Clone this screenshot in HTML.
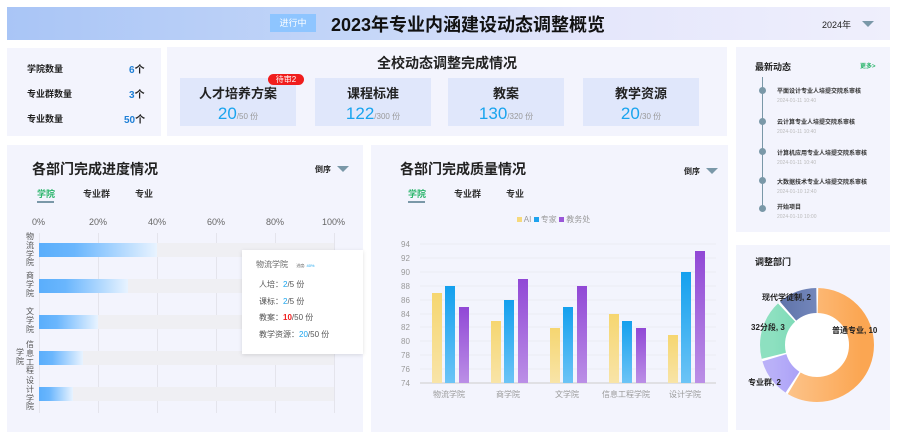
<!DOCTYPE html>
<html><head><meta charset="utf-8"><style>
*{margin:0;padding:0;box-sizing:border-box}
body{width:900px;height:440px;background:#fff;font-family:"Liberation Sans","Noto Sans CJK SC",sans-serif;position:relative;overflow:hidden;color:#222}
.a{position:absolute}
.card{position:absolute;background:#f3f4fd}
.b{font-weight:bold}
.sub{position:absolute;background:#e0e7fb;text-align:center;width:116px;height:48px;top:78px}
.sub .t{font-size:13px;font-weight:bold;margin-top:5px;color:#222}
.sub .v{font-size:17px;color:#19a4ee;margin-top:2px}
.sub .v small{font-size:8px;color:#999}
.caret{position:absolute;width:0;height:0;border-left:6px solid transparent;border-right:6px solid transparent;border-top:6px solid #7a98a8}
.tab{position:absolute;font-size:9px;font-weight:bold;color:#333}
.gl{position:absolute;width:1px;background:#e4e4ec;top:233px;height:180px}
.bg{position:absolute;left:39px;width:295px;height:14px;background:#efeff3}
.bar{position:absolute;left:39px;height:14px;background:linear-gradient(90deg,#5aaefc,#6ab6fd 30%,#e8f3ff)}
.yl{position:absolute;font-size:8px;color:#555;width:10px;line-height:8.8px;left:25px;text-align:center}
.tl{position:absolute;left:777px;font-size:6px;font-weight:bold;color:#333}
.td{position:absolute;left:777px;font-size:5px;color:#bbb}
.dot{position:absolute;left:759px;width:7px;height:7px;border-radius:50%;background:#7a98a8}
</style></head><body>
<div class="a" style="left:7px;top:7px;width:883px;height:33px;background:linear-gradient(90deg,#a9c5f6,#c4d6f8 40%,#e4e6fb 65%,#efeffc)"></div>
<div class="a" style="left:270px;top:14px;width:46px;height:18px;background:#8ec5ff;color:#fff;font-size:9px;text-align:center;line-height:18px">进行中</div>
<div class="a b" style="left:331px;top:11px;font-size:18px;color:#111">2023年专业内涵建设动态调整概览</div>
<div class="a" style="left:822px;top:18px;font-size:9px;color:#222">2024年</div>
<div class="caret" style="left:862px;top:21px"></div>

<div class="card" style="left:7px;top:48px;width:154px;height:88px"></div>
<div class="a b" style="left:27px;top:62px;font-size:9px">学院数量</div>
<div class="a b" style="left:27px;top:87px;font-size:9px">专业群数量</div>
<div class="a b" style="left:27px;top:112px;font-size:9px">专业数量</div>
<div class="a b" style="left:129px;top:61px;font-size:10px"><span style="color:#1e7fd6">6</span>个</div>
<div class="a b" style="left:129px;top:86px;font-size:10px"><span style="color:#1e7fd6">3</span>个</div>
<div class="a b" style="left:124px;top:111px;font-size:10px"><span style="color:#1e7fd6">50</span>个</div>

<div class="card" style="left:167px;top:47px;width:560px;height:89px"></div>
<div class="a b" style="left:167px;width:560px;text-align:center;top:53px;font-size:14px">全校动态调整完成情况</div>
<div class="sub" style="left:180px"><div class="t">人才培养方案</div><div class="v">20<small>/50 份</small></div></div>
<div class="a" style="left:268px;top:74px;width:36px;height:11px;background:#f01d1d;border-radius:6px;color:#fff;font-size:8px;text-align:center;line-height:11px">待审2</div>
<div class="sub" style="left:315px"><div class="t">课程标准</div><div class="v">122<small>/300 份</small></div></div>
<div class="sub" style="left:448px"><div class="t">教案</div><div class="v">130<small>/320 份</small></div></div>
<div class="sub" style="left:583px"><div class="t">教学资源</div><div class="v">20<small>/30 份</small></div></div>

<div class="card" style="left:736px;top:47px;width:154px;height:185px"></div>
<div class="a b" style="left:755px;top:60px;font-size:9px">最新动态</div>
<div class="a b" style="left:860px;top:61px;font-size:6px;color:#2ab56b">更多&gt;</div>
<div class="a" style="left:762px;top:77px;width:1px;height:133px;background:#7a98a8"></div>
<div class="dot" style="top:87px"></div><div class="tl" style="top:86px">平面设计专业人培提交院系审核</div><div class="td" style="top:98px">2024-01-11 10:40</div>
<div class="dot" style="top:118px"></div><div class="tl" style="top:117px">云计算专业人培提交院系审核</div><div class="td" style="top:129px">2024-01-11 10:40</div>
<div class="dot" style="top:148px"></div><div class="tl" style="top:148px">计算机应用专业人培提交院系审核</div><div class="td" style="top:160px">2024-01-11 10:40</div>
<div class="dot" style="top:177px"></div><div class="tl" style="top:177px">大数据技术专业人培提交院系审核</div><div class="td" style="top:189px">2024-01-10 12:40</div>
<div class="dot" style="top:205px"></div><div class="tl" style="top:202px">开始项目</div><div class="td" style="top:214px">2024-01-10 10:00</div>

<!-- left chart -->
<div class="card" style="left:7px;top:145px;width:356px;height:287px"></div>
<div class="a b" style="left:32px;top:159px;font-size:14px">各部门完成进度情况</div>
<div class="a b" style="left:315px;top:164px;font-size:8px">倒序</div>
<div class="caret" style="left:337px;top:166px"></div>
<div class="tab" style="left:37px;top:187px;color:#2ab56b">学院</div>
<div class="a" style="left:37px;top:201px;width:17px;height:2px;background:#7a98a8"></div>
<div class="tab" style="left:83px;top:187px">专业群</div>
<div class="tab" style="left:135px;top:187px">专业</div>
<div class="a" style="left:32px;top:217px;font-size:9px;color:#666">0%</div>
<div class="a" style="left:89px;top:217px;font-size:9px;color:#666">20%</div>
<div class="a" style="left:148px;top:217px;font-size:9px;color:#666">40%</div>
<div class="a" style="left:207px;top:217px;font-size:9px;color:#666">60%</div>
<div class="a" style="left:266px;top:217px;font-size:9px;color:#666">80%</div>
<div class="a" style="left:322px;top:217px;font-size:9px;color:#666">100%</div>
<div class="gl" style="left:39px"></div><div class="gl" style="left:98px"></div><div class="gl" style="left:157px"></div><div class="gl" style="left:216px"></div><div class="gl" style="left:275px"></div><div class="gl" style="left:334px"></div>
<div class="bg" style="top:243px"></div><div class="bar" style="top:243px;width:118px"></div>
<div class="bg" style="top:279px"></div><div class="bar" style="top:279px;width:89px"></div>
<div class="bg" style="top:315px"></div><div class="bar" style="top:315px;width:59px"></div>
<div class="bg" style="top:351px"></div><div class="bar" style="top:351px;width:44px"></div>
<div class="bg" style="top:387px"></div><div class="bar" style="top:387px;width:34px"></div>
<div class="yl" style="top:233px">物流学院</div>
<div class="yl" style="top:272px">商学院</div>
<div class="yl" style="top:308px">文学院</div>
<div class="yl" style="top:341px">信息工程</div>
<div class="yl" style="top:377px">设计学院</div>
<div class="yl" style="left:15px;top:349px">学院</div>
<div class="a" style="left:242px;top:250px;width:121px;height:104px;background:#fff;box-shadow:0 1px 4px rgba(0,0,0,.12)"></div>
<div class="a" style="left:256px;top:259px;font-size:8px;color:#666">物流学院 <span style="font-size:4px;margin-left:6px">进度: <span style="color:#19a4ee">40%</span></span></div>
<div class="a" style="left:259px;top:279px;font-size:8px;color:#555">人培：<span style="color:#19a4ee">2</span>/5 份</div>
<div class="a" style="left:259px;top:296px;font-size:8px;color:#555">课标：<span style="color:#19a4ee">2</span>/5 份</div>
<div class="a" style="left:259px;top:312px;font-size:8px;color:#555">教案：<span style="color:#f01d1d;font-weight:bold">10</span>/50 份</div>
<div class="a" style="left:259px;top:329px;font-size:8px;color:#555">教学资源：<span style="color:#19a4ee">20</span>/50 份</div>

<!-- middle chart -->
<div class="card" style="left:371px;top:145px;width:357px;height:287px"></div>
<div class="a b" style="left:400px;top:159px;font-size:14px">各部门完成质量情况</div>
<div class="a b" style="left:684px;top:166px;font-size:8px">倒序</div>
<div class="caret" style="left:706px;top:168px"></div>
<div class="tab" style="left:408px;top:187px;color:#2ab56b">学院</div>
<div class="a" style="left:408px;top:201px;width:17px;height:2px;background:#7a98a8"></div>
<div class="tab" style="left:454px;top:187px">专业群</div>
<div class="tab" style="left:506px;top:187px">专业</div>
<div class="a" style="left:517px;top:214px;font-size:8px;color:#999"><span style="display:inline-block;width:5px;height:5px;background:#f6d97c"></span> AI <span style="display:inline-block;width:5px;height:5px;background:#1ea3ee"></span> 专家 <span style="display:inline-block;width:5px;height:5px;background:#9a56d8"></span> 教务处</div>
<svg class="a" style="left:371px;top:140px" width="357" height="300">
<defs>
<linearGradient id="gy" x1="0" y1="0" x2="0" y2="1"><stop offset="0" stop-color="#f6d670"/><stop offset="1" stop-color="#f8e4a8"/></linearGradient>
<linearGradient id="gb" x1="0" y1="0" x2="0" y2="1"><stop offset="0" stop-color="#14a0ee"/><stop offset="1" stop-color="#6cc4f6"/></linearGradient>
<linearGradient id="gp" x1="0" y1="0" x2="0" y2="1"><stop offset="0" stop-color="#9148d6"/><stop offset="1" stop-color="#bb8fe6"/></linearGradient>
</defs>
<g stroke="#ebebf3" stroke-width="1">
<line x1="49" x2="345" y1="104" y2="104"/><line x1="49" x2="345" y1="118" y2="118"/><line x1="49" x2="345" y1="132" y2="132"/><line x1="49" x2="345" y1="146" y2="146"/><line x1="49" x2="345" y1="160" y2="160"/><line x1="49" x2="345" y1="174" y2="174"/><line x1="49" x2="345" y1="187" y2="187"/><line x1="49" x2="345" y1="201" y2="201"/><line x1="49" x2="345" y1="215" y2="215"/><line x1="49" x2="345" y1="229" y2="229"/>
</g>
<line x1="49" x2="345" y1="243" y2="243" stroke="#ccc"/>
<g font-size="8" fill="#999" font-family="Liberation Sans">
<text x="30" y="107">94</text><text x="30" y="121">92</text><text x="30" y="135">90</text><text x="30" y="149">88</text><text x="30" y="163">86</text><text x="30" y="177">84</text><text x="30" y="190">82</text><text x="30" y="204">80</text><text x="30" y="218">78</text><text x="30" y="232">76</text><text x="30" y="246">74</text>
</g>
<g font-size="8" fill="#999" font-family="Liberation Sans,Noto Sans CJK SC" text-anchor="middle">
<text x="78" y="257">物流学院</text><text x="137" y="257">商学院</text><text x="196" y="257">文学院</text><text x="255" y="257">信息工程学院</text><text x="314" y="257">设计学院</text>
</g>
<g>
<rect x="61" y="153" width="10" height="90" fill="url(#gy)"/><rect x="74" y="146" width="10" height="97" fill="url(#gb)"/><rect x="88" y="167" width="10" height="76" fill="url(#gp)"/>
<rect x="120" y="181" width="10" height="62" fill="url(#gy)"/><rect x="133" y="160" width="10" height="83" fill="url(#gb)"/><rect x="147" y="139" width="10" height="104" fill="url(#gp)"/>
<rect x="179" y="188" width="10" height="55" fill="url(#gy)"/><rect x="192" y="167" width="10" height="76" fill="url(#gb)"/><rect x="206" y="146" width="10" height="97" fill="url(#gp)"/>
<rect x="238" y="174" width="10" height="69" fill="url(#gy)"/><rect x="251" y="181" width="10" height="62" fill="url(#gb)"/><rect x="265" y="188" width="10" height="55" fill="url(#gp)"/>
<rect x="297" y="195" width="10" height="48" fill="url(#gy)"/><rect x="310" y="132" width="10" height="111" fill="url(#gb)"/><rect x="324" y="111" width="10" height="132" fill="url(#gp)"/>
</g>
</svg>

<!-- donut -->
<div class="card" style="left:736px;top:245px;width:154px;height:185px"></div>
<div class="a b" style="left:755px;top:255px;font-size:9px">调整部门</div>
<svg class="a" style="left:736px;top:245px" width="154" height="185">
<defs>
<linearGradient id="d1" x1="0" y1="0" x2="0" y2="1"><stop offset="0" stop-color="#fdc995"/><stop offset="1" stop-color="#fba652"/></linearGradient>
<linearGradient id="d2" x1="0" y1="0" x2="0" y2="1"><stop offset="0" stop-color="#b9b0f8"/><stop offset="1" stop-color="#8d7ff4"/></linearGradient>
<linearGradient id="d3" x1="0" y1="0" x2="0" y2="1"><stop offset="0" stop-color="#8de0c0"/><stop offset="1" stop-color="#55cc9e"/></linearGradient>
<linearGradient id="d4" x1="0" y1="0" x2="0" y2="1"><stop offset="0" stop-color="#5b6fa6"/><stop offset="1" stop-color="#8c9fd0"/></linearGradient>
</defs>
<circle cx="81" cy="100" r="57" fill="#fff"/>
<g transform="rotate(-90 81 100)" fill="none" stroke-width="25">
<circle cx="81" cy="100" r="44.5" stroke="url(#d1)" stroke-dasharray="162.5 400" stroke-dashoffset="-1"/>
<circle cx="81" cy="100" r="44.5" stroke="url(#d2)" stroke-dasharray="30.9 400" stroke-dashoffset="-165.5"/>
<circle cx="81" cy="100" r="44.5" stroke="url(#d3)" stroke-dasharray="47.3 400" stroke-dashoffset="-198.4"/>
<circle cx="81" cy="100" r="44.5" stroke="url(#d4)" stroke-dasharray="30.9 400" stroke-dashoffset="-247.7"/>
</g>
<g font-size="8" font-weight="bold" fill="#222" font-family="Liberation Sans,Noto Sans CJK SC">
<text x="96" y="88">普通专业, 10</text>
<text x="12" y="140">专业群, 2</text>
<text x="15" y="85">32分段, 3</text>
<text x="26" y="55">现代学徒制, 2</text>
</g>
</svg>
</body></html>
